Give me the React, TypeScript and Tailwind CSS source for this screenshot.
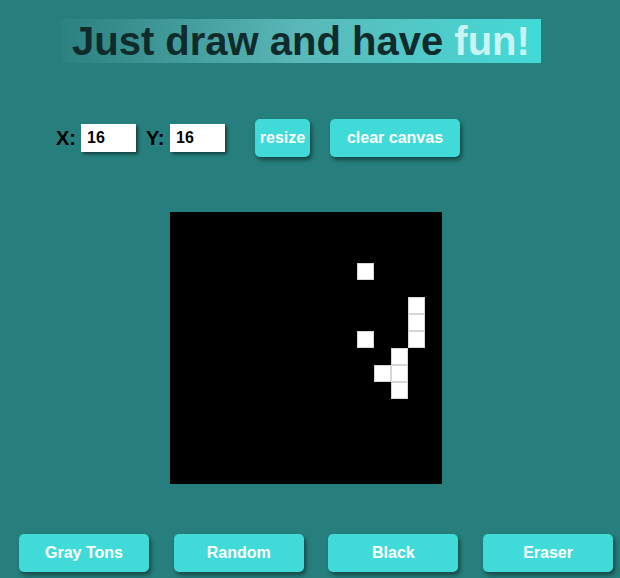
import React from "react";

const whiteCells = new Set([
  "3-11",
  "5-14",
  "6-14",
  "7-14",
  "7-11",
  "8-13",
  "9-12",
  "9-13",
  "10-13",
]);

const btn =
  "bg-[#40dbd8] text-white font-bold text-[16px] rounded-[5px] shadow-[2px_3px_4px_rgba(0,0,0,0.45)] flex items-center justify-center";

export default function App() {
  const cells = [];
  for (let r = 0; r < 16; r++) {
    for (let c = 0; c < 16; c++) {
      const on = whiteCells.has(`${r}-${c}`);
      cells.push(
        <div
          key={`${r}-${c}`}
          className={
            on
              ? "w-[17px] h-[17px] bg-white border border-[#d6d6d6]"
              : "w-[17px] h-[17px] bg-black"
          }
        />
      );
    }
  }

  return (
    <div
      className="w-full h-[578px] bg-[#267f7c] overflow-hidden"
      style={{ fontFamily: '"Liberation Sans", Arial, sans-serif' }}
    >
      <div className="pt-[19px] pl-[61px]">
        <h1 className="inline-block h-[44px] px-[11px] text-[40px] font-bold leading-[44px] text-[#102b2b] bg-gradient-to-r from-[#2a817f] via-[#5ab8b8] to-[#41dad7]">
          Just draw and have <span className="text-[#c9f4f3]">fun!</span>
        </h1>
      </div>

      <div className="mt-[56px] flex items-center h-[38px] pl-[56px]">
        <span className="text-[20px] font-bold text-black w-[25px]">X:</span>
        <div className="w-[55px] h-[28px] bg-white shadow-[2px_2px_3px_rgba(0,0,0,0.5)] flex items-center pl-[6px] text-[16px] font-bold text-black">
          16
        </div>
        <span className="ml-[10px] text-[20px] font-bold text-black w-[24px]">Y:</span>
        <div className="w-[55px] h-[28px] bg-white shadow-[2px_2px_3px_rgba(0,0,0,0.5)] flex items-center pl-[6px] text-[16px] font-bold text-black">
          16
        </div>
        <div className={`${btn} ml-[30px] w-[55px] h-[38px]`}>resize</div>
        <div className={`${btn} ml-[20px] w-[130px] h-[38px]`}>clear canvas</div>
      </div>

      <div className="mt-[55px] ml-[170px] w-[272px] h-[272px] grid grid-cols-[repeat(16,17px)] grid-rows-[repeat(16,17px)] bg-black">
        {cells}
      </div>

      <div className="mt-[50px] flex pl-[19px] gap-[24.7px]">
        <div className={`${btn} w-[130px] h-[38px]`}>Gray Tons</div>
        <div className={`${btn} w-[130px] h-[38px]`}>Random</div>
        <div className={`${btn} w-[130px] h-[38px]`}>Black</div>
        <div className={`${btn} w-[130px] h-[38px]`}>Eraser</div>
      </div>
    </div>
  );
}
